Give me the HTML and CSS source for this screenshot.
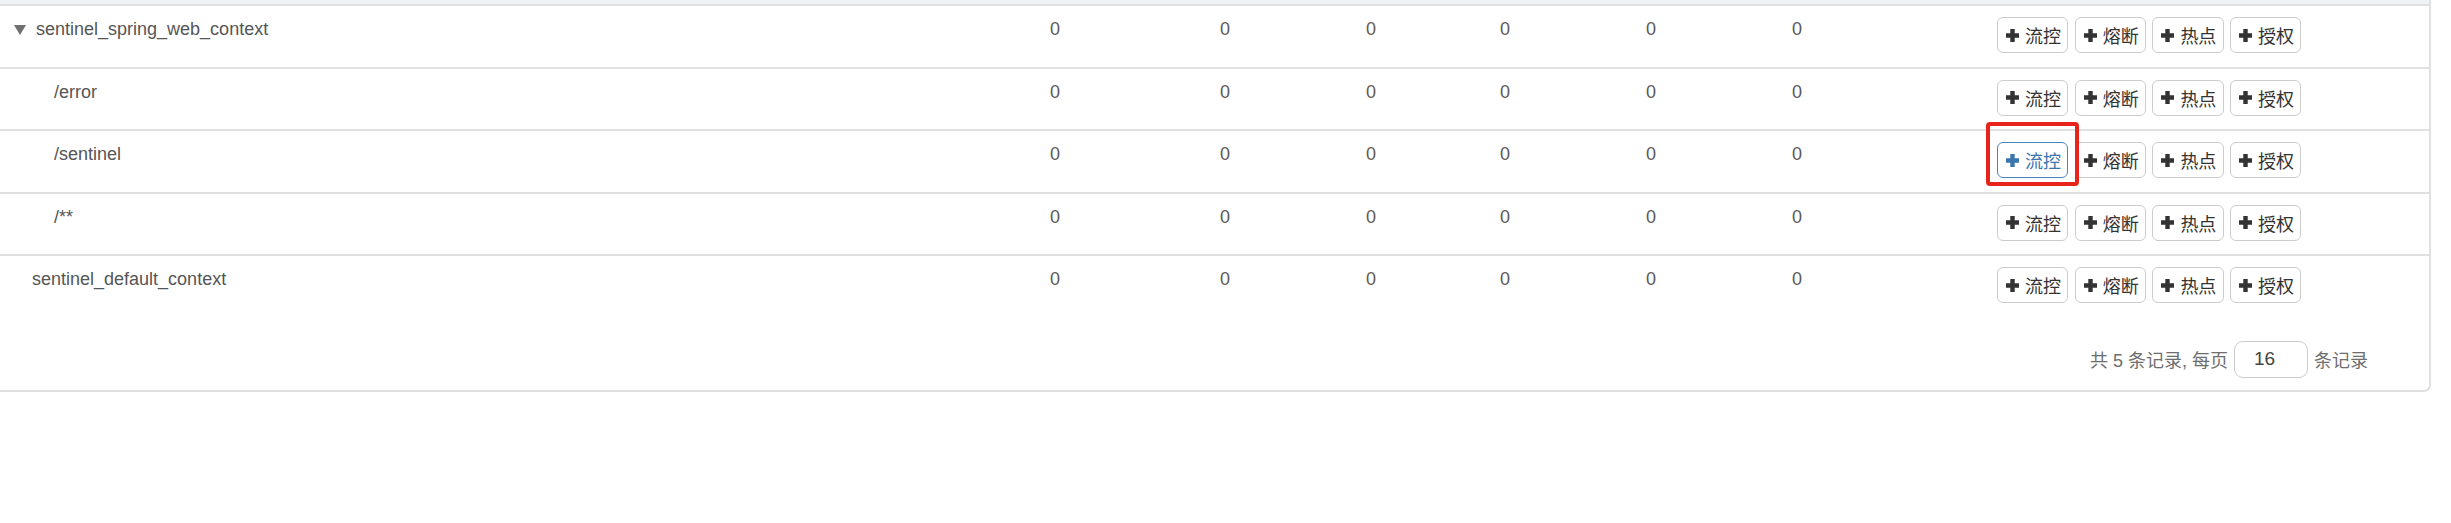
FILE: index.html
```html
<!DOCTYPE html>
<html lang="zh-CN">
<head>
<meta charset="utf-8">
<title>簇点链路</title>
<link rel="stylesheet" href="styles.css">
</head>
<body>
<div class="panel">
  <div class="thead-tail"></div>

  <div class="row">
    <div class="name name-root"><span class="caret"></span><span>sentinel_spring_web_context</span></div>
    <div class="num">0</div><div class="num">0</div><div class="num warm">0</div><div class="num">0</div><div class="num">0</div><div class="num">0</div>
    <div class="actions">
      <button class="btn"><svg class="plus" viewBox="0 0 13 13"><path d="M4.3 0h4.4v4.3H13v4.4H8.7V13H4.3V8.7H0V4.3h4.3z"/></svg>流控</button>
      <button class="btn"><svg class="plus" viewBox="0 0 13 13"><path d="M4.3 0h4.4v4.3H13v4.4H8.7V13H4.3V8.7H0V4.3h4.3z"/></svg>熔断</button>
      <button class="btn"><svg class="plus" viewBox="0 0 13 13"><path d="M4.3 0h4.4v4.3H13v4.4H8.7V13H4.3V8.7H0V4.3h4.3z"/></svg>热点</button>
      <button class="btn"><svg class="plus" viewBox="0 0 13 13"><path d="M4.3 0h4.4v4.3H13v4.4H8.7V13H4.3V8.7H0V4.3h4.3z"/></svg>授权</button>
    </div>
  </div>

  <div class="row">
    <div class="name name-child">/error</div>
    <div class="num">0</div><div class="num">0</div><div class="num warm">0</div><div class="num">0</div><div class="num">0</div><div class="num">0</div>
    <div class="actions">
      <button class="btn"><svg class="plus" viewBox="0 0 13 13"><path d="M4.3 0h4.4v4.3H13v4.4H8.7V13H4.3V8.7H0V4.3h4.3z"/></svg>流控</button>
      <button class="btn"><svg class="plus" viewBox="0 0 13 13"><path d="M4.3 0h4.4v4.3H13v4.4H8.7V13H4.3V8.7H0V4.3h4.3z"/></svg>熔断</button>
      <button class="btn"><svg class="plus" viewBox="0 0 13 13"><path d="M4.3 0h4.4v4.3H13v4.4H8.7V13H4.3V8.7H0V4.3h4.3z"/></svg>热点</button>
      <button class="btn"><svg class="plus" viewBox="0 0 13 13"><path d="M4.3 0h4.4v4.3H13v4.4H8.7V13H4.3V8.7H0V4.3h4.3z"/></svg>授权</button>
    </div>
  </div>

  <div class="row">
    <div class="name name-child">/sentinel</div>
    <div class="num">0</div><div class="num">0</div><div class="num warm">0</div><div class="num">0</div><div class="num">0</div><div class="num">0</div>
    <div class="actions">
      <span class="annotated">
        <button class="btn btn-focus"><svg class="plus" viewBox="0 0 13 13"><path d="M4.3 0h4.4v4.3H13v4.4H8.7V13H4.3V8.7H0V4.3h4.3z"/></svg>流控</button>
        <span class="callout"></span>
      </span>
      <button class="btn"><svg class="plus" viewBox="0 0 13 13"><path d="M4.3 0h4.4v4.3H13v4.4H8.7V13H4.3V8.7H0V4.3h4.3z"/></svg>熔断</button>
      <button class="btn"><svg class="plus" viewBox="0 0 13 13"><path d="M4.3 0h4.4v4.3H13v4.4H8.7V13H4.3V8.7H0V4.3h4.3z"/></svg>热点</button>
      <button class="btn"><svg class="plus" viewBox="0 0 13 13"><path d="M4.3 0h4.4v4.3H13v4.4H8.7V13H4.3V8.7H0V4.3h4.3z"/></svg>授权</button>
    </div>
  </div>

  <div class="row">
    <div class="name name-child">/**</div>
    <div class="num">0</div><div class="num">0</div><div class="num warm">0</div><div class="num">0</div><div class="num">0</div><div class="num">0</div>
    <div class="actions">
      <button class="btn"><svg class="plus" viewBox="0 0 13 13"><path d="M4.3 0h4.4v4.3H13v4.4H8.7V13H4.3V8.7H0V4.3h4.3z"/></svg>流控</button>
      <button class="btn"><svg class="plus" viewBox="0 0 13 13"><path d="M4.3 0h4.4v4.3H13v4.4H8.7V13H4.3V8.7H0V4.3h4.3z"/></svg>熔断</button>
      <button class="btn"><svg class="plus" viewBox="0 0 13 13"><path d="M4.3 0h4.4v4.3H13v4.4H8.7V13H4.3V8.7H0V4.3h4.3z"/></svg>热点</button>
      <button class="btn"><svg class="plus" viewBox="0 0 13 13"><path d="M4.3 0h4.4v4.3H13v4.4H8.7V13H4.3V8.7H0V4.3h4.3z"/></svg>授权</button>
    </div>
  </div>

  <div class="row">
    <div class="name name-top">sentinel_default_context</div>
    <div class="num">0</div><div class="num">0</div><div class="num warm">0</div><div class="num">0</div><div class="num">0</div><div class="num">0</div>
    <div class="actions">
      <button class="btn"><svg class="plus" viewBox="0 0 13 13"><path d="M4.3 0h4.4v4.3H13v4.4H8.7V13H4.3V8.7H0V4.3h4.3z"/></svg>流控</button>
      <button class="btn"><svg class="plus" viewBox="0 0 13 13"><path d="M4.3 0h4.4v4.3H13v4.4H8.7V13H4.3V8.7H0V4.3h4.3z"/></svg>熔断</button>
      <button class="btn"><svg class="plus" viewBox="0 0 13 13"><path d="M4.3 0h4.4v4.3H13v4.4H8.7V13H4.3V8.7H0V4.3h4.3z"/></svg>热点</button>
      <button class="btn"><svg class="plus" viewBox="0 0 13 13"><path d="M4.3 0h4.4v4.3H13v4.4H8.7V13H4.3V8.7H0V4.3h4.3z"/></svg>授权</button>
    </div>
  </div>

  <div class="pager">
    <span>共 5 条记录, 每页</span>
    <span class="page-size">16</span>
    <span>条记录</span>
  </div>
</div>
</body>
</html>
```

FILE: styles.css
```css
html, body {
  margin: 0;
  padding: 0;
  background: #ffffff;
}

body {
  font-family: "Liberation Sans", Arial, "Noto Sans CJK SC", sans-serif;
  font-size: 18px;
  color: #555555;
}

.panel {
  width: 2431px;
  box-sizing: border-box;
  border-right: 2px solid #e0e0e0;
  border-bottom: 2px solid #e0e0e0;
  border-bottom-right-radius: 7px;
}

.thead-tail {
  height: 4px;
  background: #f1f2f4;
}

.row {
  display: grid;
  grid-template-columns: 1050px 170px 146px 134px 146px 146px 205px 1fr;
  align-items: start;
  box-sizing: border-box;
  height: 62.5px;
  padding-top: 11.3px;
  border-top: 2px solid #e0e0e0;
  line-height: 25px;
}

.name {
  display: flex;
  align-items: center;
  height: 25px;
  white-space: nowrap;
}

.name-root {
  padding-left: 14px;
  gap: 10px;
}

.name-top {
  padding-left: 32px;
}

.name-child {
  padding-left: 54px;
}

.caret {
  width: 0;
  height: 0;
  border-left: 6.5px solid transparent;
  border-right: 6.5px solid transparent;
  border-top: 10px solid #707070;
  margin-top: 1px;
}

.num {
  color: #5a5a5a;
}

.num.warm {
  color: #675a50;
}

.actions {
  display: flex;
  gap: 6.3px;
}

.btn {
  display: inline-flex;
  align-items: center;
  box-sizing: border-box;
  width: 71.4px;
  height: 36px;
  margin: 0;
  padding: 0 0 0 8px;
  gap: 6px;
  border: 1px solid #cccccc;
  border-radius: 6px;
  background: #ffffff;
  color: #333333;
  font-family: "Noto Sans CJK SC", "Liberation Sans", sans-serif;
  font-size: 18px;
  line-height: 1;
}

.plus {
  width: 13px;
  height: 13px;
  fill: currentColor;
  flex: none;
}

.btn-focus {
  border-color: #4a84bd;
  color: #3a75ad;
}

.annotated {
  position: relative;
  display: flex;
}

.callout {
  position: absolute;
  left: -11px;
  top: -20px;
  width: 93px;
  height: 64px;
  box-sizing: border-box;
  border: 4px solid #e8231b;
  border-radius: 4px;
}

.pager {
  display: flex;
  justify-content: flex-end;
  align-items: center;
  gap: 6px;
  padding: 24px 61px 12px 0;
  color: #6e6e6e;
  font-family: "Liberation Sans", Arial, "Noto Sans CJK SC", sans-serif;
}

.page-size {
  box-sizing: border-box;
  width: 74px;
  height: 37px;
  padding-left: 19px;
  display: flex;
  align-items: center;
  border: 1px solid #cccccc;
  border-radius: 9px;
  color: #444444;
  font-size: 19px;
}
```
